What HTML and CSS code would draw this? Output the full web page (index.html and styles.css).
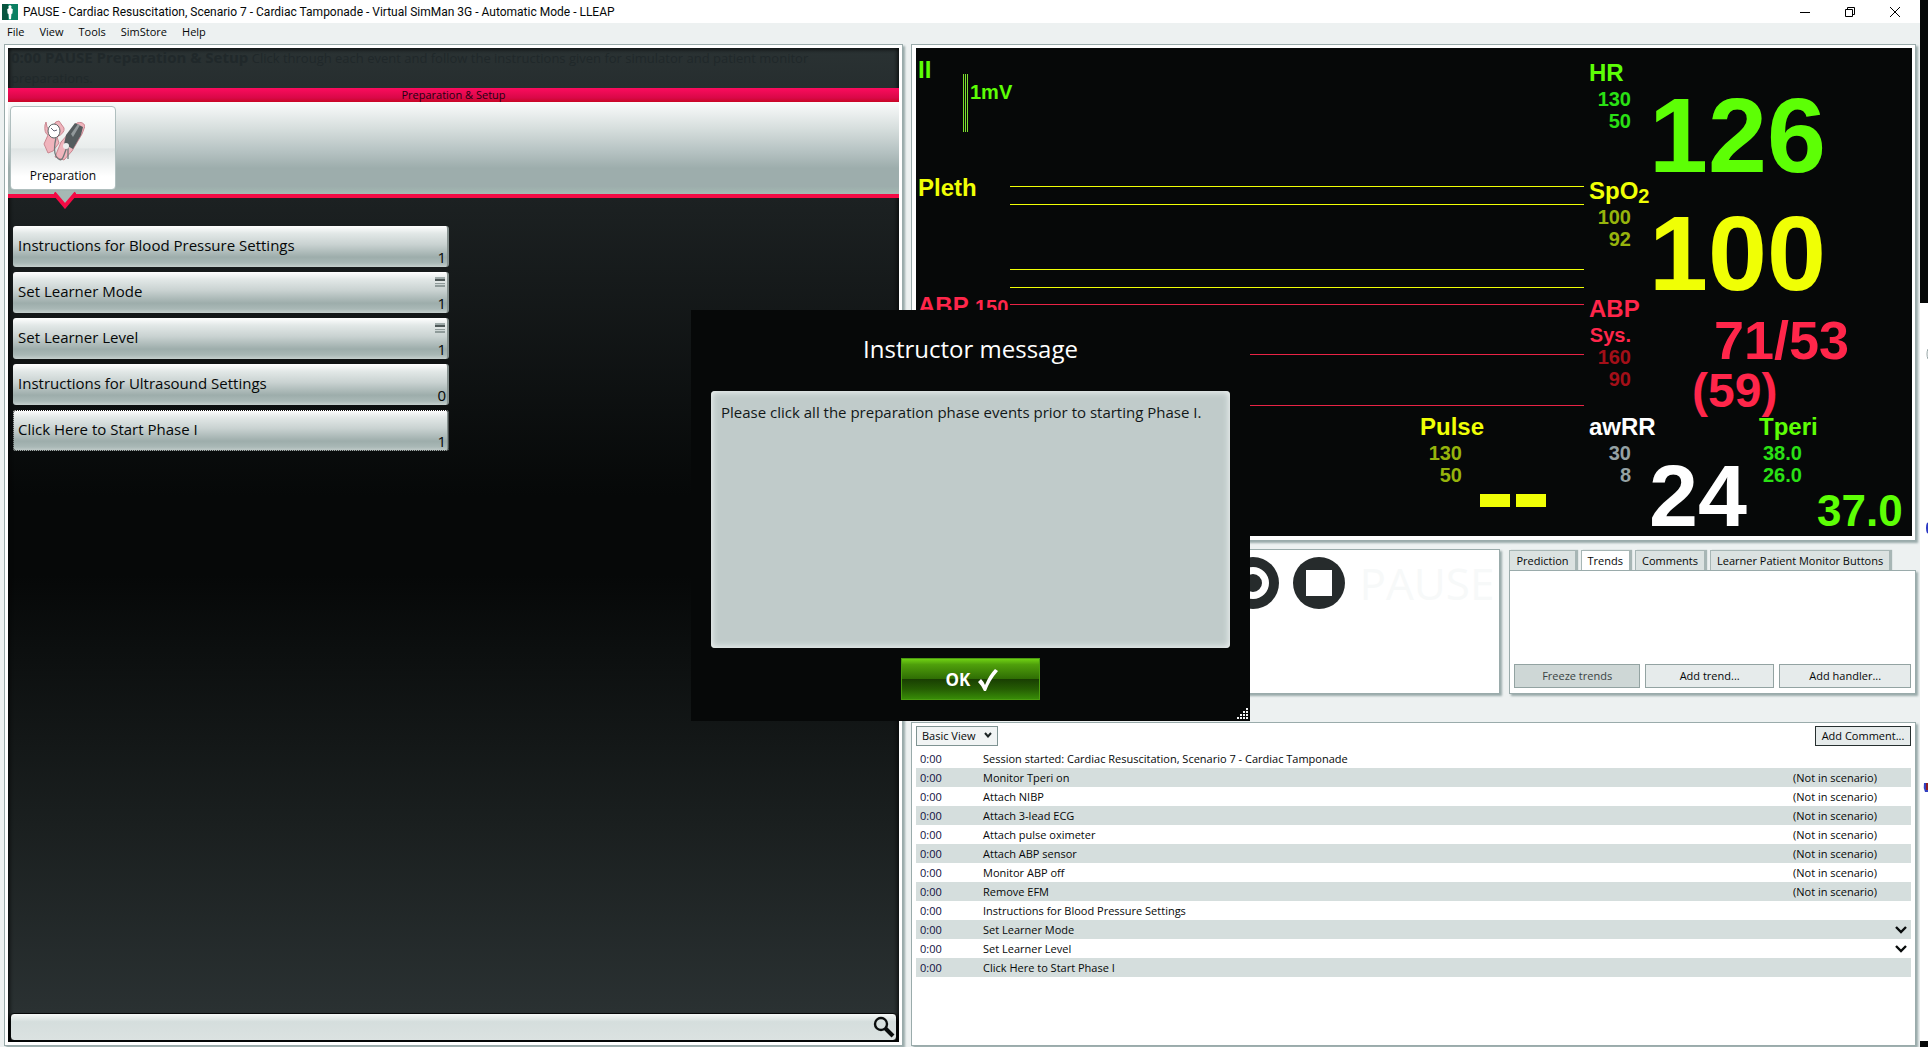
FILE: index.html
```html
<!DOCTYPE html>
<html lang="en">
<head>
<meta charset="utf-8">
<title>PAUSE - Cardiac Resuscitation, Scenario 7 - Cardiac Tamponade - Virtual SimMan 3G - Automatic Mode - LLEAP</title>
<link rel="stylesheet" href="styles.css">
</head>
<body>
<div class="screen">
<div class="app">
  <header class="titlebar">
    <svg class="app-icon" width="16" height="16" viewBox="0 0 16 16"><rect width="16" height="16" fill="#0b8063"/><rect width="6" height="16" fill="#07543f"/><path d="M8 1.2a1.6 1.6 0 0 1 1 2.8l1.8 1.2-.4 4.3-1 .6-.4 5.2H7l-.4-5.2-1-.6-.4-4.3L7 4a1.6 1.6 0 0 1 1-2.8z" fill="#fff"/></svg>
    <h1 class="title">PAUSE - Cardiac Resuscitation, Scenario 7 - Cardiac Tamponade - Virtual SimMan 3G - Automatic Mode - LLEAP</h1>
    <div class="window-buttons">
      <button class="window-button" aria-label="Minimize"><svg width="12" height="12" viewBox="0 0 12 12"><path d="M1 6.500h10" stroke="#000" fill="none"/></svg></button>
      <button class="window-button" aria-label="Restore"><svg width="12" height="12" viewBox="0 0 12 12"><path d="M1.500 3.500h7v7h-7zM3.500 3.500v-2h7v7h-2" stroke="#000" fill="none"/></svg></button>
      <button class="window-button" aria-label="Close"><svg width="12" height="12" viewBox="0 0 12 12"><path d="M1 1l10 10M11 1L1 11" stroke="#000" fill="none"/></svg></button>
    </div>
  </header>
  <nav class="menubar">
    <button class="menu-item">File</button>
    <button class="menu-item">View</button>
    <button class="menu-item">Tools</button>
    <button class="menu-item">SimStore</button>
    <button class="menu-item">Help</button>
  </nav>

  <main class="workspace">
    <section class="panel scenario">
      <div class="stage">
        <p class="stage-info"><strong>0:00 PAUSE Preparation &amp; Setup</strong> Click through each event and follow the instructions given for simulator and patient monitor preparations.</p>
        <h2 class="stage-title">Preparation &amp; Setup</h2>
        <div class="category-bar">
          <button class="category">
            <svg width="44" height="46" viewBox="0 0 44 46">
              <path d="M4 8q-1 8 3 10L3 27l4 9 5-2 6-8-2-6q8-4 7-9l-5-7q-4 0-5 4l1 4q-4-3-5 2l-3-4-1-5z" fill="#f0b4bc" stroke="#c98891"/>
              <path d="M14 40l6-15 8-9 8-10q6-2 8 3l-3 8-10 17-8 9z" fill="#f0b4bc" stroke="#c98891"/>
              <path d="M25 18l9-12 8 4-2 8-8 14-9-5z" fill="#555c5e"/><path d="M30 17l7-10 2 1-7 12z" fill="#92999b"/>
              <ellipse cx="13" cy="14" rx="6" ry="7" fill="#fff" stroke="#596162"/><path d="M10 11l3 3 3-1" stroke="#667" fill="none"/>
              <path d="M15 21q-3 12 0 18 5 8 8-1l4-11v15" fill="none" stroke="#707879" stroke-width="1.300"/><circle cx="25" cy="29" r="3" fill="#eee"/>
            </svg>
            <span>Preparation</span>
          </button>
          <svg class="category-pointer" width="22" height="18" viewBox="0 0 22 18"><path d="M1 4V0h20v4L11 15z" fill="#a6b8b4"/><path d="M0 2l11 13L22 2" fill="none" stroke="#f40b45" stroke-width="4"/></svg>
        </div>
        <div class="events">
          <button class="event"><span>Instructions for Blood Pressure Settings</span><span class="count">1</span></button>
          <button class="event"><span>Set Learner Mode</span><span class="has-menu"></span><span class="count">1</span></button>
          <button class="event"><span>Set Learner Level</span><span class="has-menu"></span><span class="count">1</span></button>
          <button class="event"><span>Instructions for Ultrasound Settings</span><span class="count">0</span></button>
          <button class="event focused"><span>Click Here to Start Phase I</span><span class="count">1</span></button>
        </div>
        <div class="search">
          <input class="search-input" type="text" aria-label="Search events">
          <svg width="22" height="22" viewBox="0 0 22 22"><circle cx="8" cy="8" r="6" fill="none" stroke="#0a0d0d" stroke-width="2.400"/><path d="M12 12l8 8" stroke="#0a0d0d" stroke-width="4"/></svg>
        </div>
      </div>
    </section>

    <div class="right">
      <section class="panel monitor-panel">
        <div class="monitor">
          <div class="waves">
            <div class="wave green"><span class="label">II</span><div class="scale"><i></i><i></i><i></i><span>1mV</span></div></div>
            <div class="wave yellow"><span class="label">Pleth</span>
              <svg class="trace" viewBox="0 0 574 118" preserveAspectRatio="none"><path d="M0 10.500h574M0 28.500h574M0 93.500h574M0 111.500h574" stroke="#f0ff05"/></svg></div>
            <div class="wave red"><span class="label">ABP</span><span class="top-scale">150</span>
              <svg class="trace" viewBox="0 0 574 118" preserveAspectRatio="none"><path d="M0 10.500h574M0 60.500h574M0 111.500h574" stroke="#e82345"/></svg></div>
            <div class="wave pulse yellow">
              <div class="readings"><span class="label">Pulse</span><div class="limits dim-yellow"><span>130</span><span>50</span></div></div>
              <div class="no-value"><i></i><i></i></div>
            </div>
          </div>
          <div class="params">
            <div class="param green"><div class="readings"><span class="label">HR</span><div class="limits dim-green"><span>130</span><span>50</span></div></div><span class="value">126</span></div>
            <div class="param yellow"><div class="readings"><span class="label">SpO<sub>2</sub></span><div class="limits dim-yellow"><span>100</span><span>92</span></div></div><span class="value">100</span></div>
            <div class="param red"><div class="readings"><span class="label">ABP</span><div class="limits dim-red"><span class="red">Sys.</span><span>160</span><span>90</span></div></div><div class="pressure"><span class="sysdia">71/53</span><span class="mean">(59)</span></div></div>
            <div class="param white"><div class="readings"><span class="label">awRR</span><div class="limits dim-white"><span>30</span><span>8</span></div></div><span class="value resp-value">24</span>
              <div class="readings temp green"><span class="label">Tperi</span><div class="limits dim-green"><span>38.0</span><span>26.0</span></div></div><span class="value temp-value green">37.0</span></div>
          </div>
        </div>
      </section>

      <div class="middle">
        <section class="panel session">
          <svg width="52" height="52" viewBox="0 0 52 52"><circle cx="26" cy="26" r="26" fill="#262b2c"/><circle cx="26" cy="26" r="12.500" fill="none" stroke="#fff" stroke-width="7"/></svg>
          <svg width="52" height="52" viewBox="0 0 52 52"><circle cx="26" cy="26" r="26" fill="#262b2c"/><rect x="13" y="13" width="26" height="26" fill="#fff"/></svg>
          <span class="state">PAUSE</span>
        </section>
        <section class="tabs">
          <div class="tablist">
            <button class="tab">Prediction</button>
            <button class="tab active">Trends</button>
            <button class="tab">Comments</button>
            <button class="tab">Learner Patient Monitor Buttons</button>
          </div>
          <div class="tab-body">
            <button class="flat-button pressed">Freeze trends</button>
            <button class="flat-button">Add trend...</button>
            <button class="flat-button">Add handler...</button>
          </div>
        </section>
      </div>

      <section class="panel log">
        <div class="log-tools">
          <div class="view-select"><select aria-label="Log view"><option>Basic View</option></select><svg width="8" height="6" viewBox="0 0 8 6"><path d="M1 1l3 3.500L7 1" fill="none" stroke="#1c2424" stroke-width="2"/></svg></div>
          <button class="flat-button strong">Add Comment...</button>
        </div>
        <table class="events-log">
          <tbody>
            <tr><td class="time">0:00</td><td>Session started: Cardiac Resuscitation, Scenario 7 - Cardiac Tamponade</td><td class="note"></td><td class="more"></td></tr>
            <tr><td class="time">0:00</td><td>Monitor Tperi on</td><td class="note">(Not in scenario)</td><td class="more"></td></tr>
            <tr><td class="time">0:00</td><td>Attach NIBP</td><td class="note">(Not in scenario)</td><td class="more"></td></tr>
            <tr><td class="time">0:00</td><td>Attach 3-lead ECG</td><td class="note">(Not in scenario)</td><td class="more"></td></tr>
            <tr><td class="time">0:00</td><td>Attach pulse oximeter</td><td class="note">(Not in scenario)</td><td class="more"></td></tr>
            <tr><td class="time">0:00</td><td>Attach ABP sensor</td><td class="note">(Not in scenario)</td><td class="more"></td></tr>
            <tr><td class="time">0:00</td><td>Monitor ABP off</td><td class="note">(Not in scenario)</td><td class="more"></td></tr>
            <tr><td class="time">0:00</td><td>Remove EFM</td><td class="note">(Not in scenario)</td><td class="more"></td></tr>
            <tr><td class="time">0:00</td><td>Instructions for Blood Pressure Settings</td><td class="note"></td><td class="more"></td></tr>
            <tr><td class="time">0:00</td><td>Set Learner Mode</td><td class="note"></td><td class="more"><svg width="12" height="8" viewBox="0 0 12 8"><path d="M1 1l5 5 5-5" fill="none" stroke="#080b0b" stroke-width="2.400"/></svg></td></tr>
            <tr><td class="time">0:00</td><td>Set Learner Level</td><td class="note"></td><td class="more"><svg width="12" height="8" viewBox="0 0 12 8"><path d="M1 1l5 5 5-5" fill="none" stroke="#080b0b" stroke-width="2.400"/></svg></td></tr>
            <tr><td class="time">0:00</td><td>Click Here to Start Phase I</td><td class="note"></td><td class="more"></td></tr>
          </tbody>
        </table>
      </section>
    </div>
  </main>

  <div class="dialog" role="dialog" aria-labelledby="dialog-title">
    <h2 class="dialog-title" id="dialog-title">Instructor message</h2>
    <div class="message">Please click all the preparation phase events prior to starting Phase I.</div>
    <button class="ok">OK <svg width="22" height="24" viewBox="0 0 22 24"><path d="M1 14l3-3q3 3 4 6Q12 7 18 1l3 2Q13 12 9 23H7Q5 18 1 14z" fill="#fff"/></svg></button>
    <svg class="grip" width="12" height="12" viewBox="0 0 12 12"><path d="M9 0h2v2H9zM9 3h2v2H9zM6 3h2v2H6zM9 6h2v2H9zM6 6h2v2H6zM3 6h2v2H3zM9 9h2v2H9zM6 9h2v2H6zM3 9h2v2H3zM0 9h2v2H0z" fill="#f4f6f6"/></svg>
  </div>
</div>
<aside class="desktop">
  <div class="desktop-dark"></div>
  <div class="desktop-light">
    <svg width="8" height="738" viewBox="0 0 8 738"><path d="M8 46q-1 2-1 5t1 5" fill="none" stroke="#97a5a6"/><path d="M8 220q-1 2-1 5t1 5" fill="none" stroke="#2b38c4" stroke-width="2"/><path d="M4 480q-1 5 1 9h3v-9z" fill="#3340c0"/><path d="M6 480h2v7H6z" fill="#8c1f25"/></svg>
  </div>
  <div class="desktop-foot"></div>
</aside>
</div>
</body>
</html>
```
FILE: styles.css
```css
* { box-sizing: border-box; }

body {
  margin: 0;
  font: 11px/16px "Open Sans", "Noto Sans", sans-serif;
  color: #050808;
  background: #fff;
}

button, select, input { font: inherit; color: inherit; margin: 0; border-radius: 0; }
button { padding: 0; border: 0; background: none; white-space: nowrap; }
h1, h2, p { margin: 0; font: inherit; }
svg { display: block; flex: none; }

.screen { display: flex; min-height: 100vh; }
.app { position: relative; flex: 1; display: flex; flex-direction: column; min-width: 0; background: #edf1f1; }

/* Window frame */
.titlebar { display: flex; align-items: center; height: 23px; padding: 0 3px 0 2px; background: #fff; }
.title { flex: 1; margin-left: 5px; font-family: Roboto, "Open Sans", sans-serif; font-size: 12px; }
.window-buttons { display: flex; }
.window-button { width: 45px; height: 20px; display: flex; align-items: center; justify-content: center; }
.menubar { display: flex; gap: 15px; height: 21px; padding: 0 7px; }
.menu-item { height: 18px; }
.workspace { flex: 1; display: grid; grid-template-columns: 899fr 1005fr; gap: 8px; padding: 0 4px 1px 4px; }

.panel {
  background: #fff;
  border: 1px solid #9aabab;
  box-shadow: 2px 2px 2px #9aabab;
}

/* Scenario */
.scenario { display: flex; padding: 3px; }
.stage {
  flex: 1; display: flex; flex-direction: column;
  background: linear-gradient(#2a3233 0, #1c2122 150px, #060808 45%, #060808 53%, #1a1f1f 78%, #2a3132 97%, #000 98%);
  box-shadow: inset 0 0 4px 1px #050707;
}
.stage-info { height: 40px; padding: 0 64px 0 3px; font-size: 13px; line-height: 20px; color: #20282a; }
.stage-info strong { font-size: 15px; line-height: 18px; }
.stage-title { height: 14px; line-height: 14px; text-align: center; color: #260010; font-weight: 500; background: linear-gradient(#fb0c5e, #d90848 70%, #c90624); }
.category-bar {
  position: relative; height: 96px; padding: 4px 2px;
  border-bottom: 4px solid #f40b45;
  background: linear-gradient(#fafbfb, #d5dddc 30%, #b4c1c1 55%, #9dadac 72%, #9dadac 92%, #a4bbb3);
}
.category {
  width: 106px; height: 84px; display: flex; flex-direction: column; align-items: center; gap: 5px; padding-top: 10px;
  border: 1px solid #b0bfbf; border-radius: 4px; font-size: 12px;
  background: linear-gradient(#fff, #e9edec 50%, #dfe4e4 51%, #fff 85%);
}
.category-pointer { position: absolute; left: 46px; top: 89px; }
.events { flex: 1; display: flex; flex-direction: column; gap: 5px; padding: 28px 450px 0 5px; }
.event {
  position: relative; height: 41px; padding: 0 5px; text-align: left; font-size: 15px; line-height: 34px;
  border-radius: 3px; border-right: 2px solid #86918f;
  background: linear-gradient(#fff, #e2e8e7 18%, #c9d2d1 45%, #9dadab 76%, #a9b8b6 90%, #c5cfcd);
}
.event > span:first-child { display: block; height: 38px; }
.focused { outline: 1px dotted #111; outline-offset: -1px; }
.count { position: absolute; right: 1px; bottom: 1px; line-height: 17px; }
.has-menu { position: absolute; right: 2px; top: 5px; width: 10px; height: 10px; background: linear-gradient(#9fabaa 2px, #4d5757 2px 4px, #dfe5e4 4px 6px, #8f9b9a 6px 7px, #cdd6d5 7px 8px, #8f9b9a 8px); }
.search {
  display: flex; align-items: center; height: 28px; margin: 0 2px 1px; padding-right: 1px;
  border: 1px solid #060808; border-radius: 4px; background: linear-gradient(#f5f8f7, #d5dedd 30%, #dbe2e1);
}
.search-input { flex: 1; height: 24px; border: 0; background: none; }

/* Patient monitor */
.right { display: flex; flex-direction: column; gap: 8px; min-width: 0; }
.monitor-panel { padding: 3px 3px 4px 4px; }
.monitor { display: flex; gap: 5px; height: 488px; background: #060808; font: bold 20px/22px "Liberation Sans", Arial, sans-serif; }
.waves { flex: 1; display: flex; flex-direction: column; padding-top: 10px; }
.wave { display: flex; height: 118px; padding-left: 2px; }
.label { font-size: 24px; line-height: 24px; }
.waves > .wave > .label { width: 45px; }
.waves > .yellow > .label { width: 92px; }
.waves > .red > .label { width: 57px; }
.scale { display: flex; gap: 1px; height: 58px; margin-top: 16px; }
.scale i { width: 1px; background: #7be02c; }
.scale span { margin-left: 1px; padding-top: 7px; }
.top-scale { width: 35px; padding-top: 2px; }
.trace { flex: 1 1 0; min-width: 0; width: 100%; height: 118px; }
.pulse { padding: 3px 38px 0 0; justify-content: flex-end; gap: 0; }
.pulse .readings { width: 60px; }
.no-value { display: flex; gap: 6px; margin-top: 79px; }
.no-value i { width: 30px; height: 13px; background: #f0ff05; }
.params { flex: none; width: 323px; padding-top: 13px; }
.param { display: flex; height: 118px; }
.readings { width: 60px; }
.label { display: block; white-space: nowrap; }
.label sub { font-size: 20px; line-height: 0; vertical-align: -4px; }
.limits { display: flex; flex-direction: column; width: 42px; margin-top: 3px; text-align: right; }
.value { font-size: 106px; line-height: 88px; padding-top: 30px; }
.resp-value { width: 110px; font-size: 88px; padding-top: 37px; }
.pressure { display: flex; flex-direction: column; margin-left: 43px; }
.sysdia { font-size: 54px; line-height: 54px; margin-left: 22px; padding-top: 16px; }
.mean { font-size: 48px; line-height: 48px; }
.temp { width: 58px; }
.temp .limits { text-align: left; padding-left: 4px; }
.temp-value { font-size: 44px; padding-top: 52px; }
.green { color: #5dff05; }
.yellow { color: #f0ff05; }
.red { color: #ff264a; }
.white { color: #fff; }
.dim-green { color: #2ae014; }
.dim-yellow { color: #96b40c; }
.dim-red { color: #a30f18; }
.dim-white { color: #94a1a3; }

/* Session controls and trends */
.middle { display: grid; grid-template-columns: 590fr 407fr; gap: 9px; height: 145px; }
.session { display: flex; justify-content: flex-end; gap: 14px; padding: 7px 4px; }
.state { width: 136px; font-size: 44px; line-height: 52px; color: #f7f9f9; }
.tabs { display: flex; flex-direction: column; }
.tablist { display: flex; gap: 5px; height: 22px; padding-top: 1px; }
.tab { padding: 0 6px; border: 1px solid #a7b6b5; border-bottom-color: #8fa09f; background: #dbe2e1; box-shadow: 2px 0 1px #a7b6b5; }
.active { background: #fff; border-bottom-color: #fff; }
.tab-body {
  flex: 1; display: grid; grid-template-columns: 125fr 129fr 131fr; gap: 5px; align-items: end; padding: 4px 4px 5px;
  margin-top: -1px; background: #fff; border: 1px solid #9aabab; box-shadow: 2px 2px 2px #9aabab;
}
.tab-body .flat-button { height: 24px; }
.flat-button { border: 1px solid #93a3a2; background: #e6ebeb; }
.pressed { background: #ced7d6; color: #3a4444; }
.strong { width: 96px; border-color: #273030; }

/* Session log */
.log { flex: 1; margin-top: 20px; padding: 3px 4px; }
.log-tools { display: flex; justify-content: space-between; height: 20px; margin-bottom: 3px; }
.view-select { position: relative; width: 82px; height: 20px; }
.view-select select { width: 100%; height: 100%; padding: 0 5px; appearance: none; border: 1px solid #7f9392; background: #f1f4f4; }
.view-select svg { position: absolute; right: 6px; top: 6px; pointer-events: none; }
.events-log { width: 100%; border-collapse: collapse; }
.events-log tr { height: 19px; }
.events-log tr:nth-child(even) { background: #d5dedd; }
.events-log td { padding: 0; line-height: 19px; }
.events-log .time { width: 67px; padding-left: 4px; color: #101040; }
.events-log .note { width: 102px; }
.events-log .more { width: 16px; }

/* Instructor message dialog */
.dialog {
  position: absolute; left: 691px; top: 310px; width: 559px; height: 411px;
  display: flex; flex-direction: column; align-items: center; padding: 20px; background: #060808; color: #fff;
}
.dialog-title { height: 61px; font-size: 24px; line-height: 38px; }
.message {
  align-self: stretch; height: 257px; padding: 9px 10px; font-size: 15px; line-height: 24px; color: #121818;
  background: #c0cbca; border-radius: 4px; box-shadow: inset 0 0 6px 1px #f0f4f3;
}
.ok {
  display: flex; align-items: center; justify-content: center; gap: 7px; width: 139px; height: 42px; margin-top: 10px; padding: 2px 0 0 4px;
  border: 1px solid #4a9c10; font-size: 17px; font-weight: bold;
  background: linear-gradient(#6fd014, #4f9f0b 14%, #2f6d04 50%, #193f02 51%, #255c03 75%, #378c07);
}
.grip { position: absolute; right: 1px; bottom: 1px; }

/* Strip of the desktop beside the window */
.desktop { flex: none; width: 8px; display: flex; flex-direction: column; overflow: hidden; }
.desktop-dark { height: 303px; background: #060808; }
.desktop-light { flex: 1; }
.desktop-foot { height: 6px; background: #060808; }
```
